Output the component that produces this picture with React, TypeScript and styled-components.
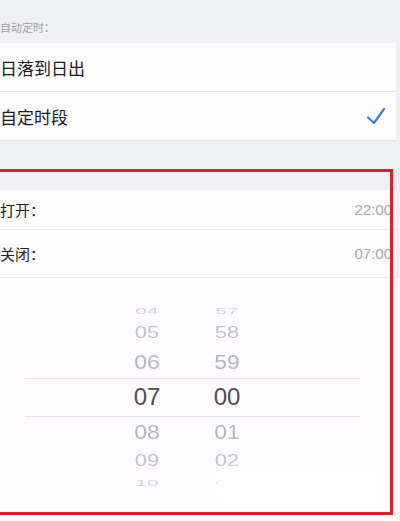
import * as React from "react";
import styled, { createGlobalStyle } from "styled-components";

const GlobalStyle = createGlobalStyle`
  html, body {
    margin: 0;
    padding: 0;
    background: #eef0f5;
  }
  body {
    font-family: "Noto Sans CJK SC", "Liberation Sans", sans-serif;
  }
`;

const Screen = styled.div`
  width: 400px;
  height: 521px;
  overflow: hidden;
  background: #eef0f5;
`;

const SectionLabel = styled.div`
  height: 43px;
  box-sizing: border-box;
  padding: 19px 0 0 0;
  font-size: 11px;
  line-height: 16px;
  color: #a2a2a8;
`;

const Group = styled.div`
  margin-right: 4px;
  background: #fdfdfe;
`;

const OptionRow = styled.div`
  height: 48px;
  display: flex;
  align-items: center;
  justify-content: space-between;
  padding-right: 10px;
  font-size: 17px;
  color: #1a1a1e;
  border-bottom: 1px solid #e3e3e8;
`;

const Schedule = styled.div`
  position: relative;
  height: 381px;
`;

const Gap = styled.div`
  height: 49px;
`;

const TimeRow = styled.div<{ $h: number }>`
  height: ${(p) => p.$h}px;
  display: flex;
  align-items: center;
  justify-content: space-between;
  padding-right: 4px;
  border-bottom: 1px solid #ececf0;
  background: #fdfdfe;
`;

const TimeLabel = styled.span`
  font-size: 15px;
  color: #222226;
`;

const TimeValue = styled.span`
  font-family: "Liberation Sans", sans-serif;
  font-size: 15px;
  color: #a8a8ae;
`;

const Picker = styled.div`
  position: relative;
  height: 250px;
  box-sizing: border-box;
  padding: 24px 0 0 122px;
  background: #fefcfe;
  display: flex;
  gap: 30px;
`;

const Band = styled.div`
  position: absolute;
  left: 25px;
  width: 335px;
  top: 100px;
  height: 37px;
  border-top: 1px solid #e4e4e8;
  border-bottom: 1px solid #e4e4e8;
`;

const Wheel = styled.div`
  width: 50px;
  display: flex;
  flex-direction: column;
`;

const looks = [
  { h: 38, size: 24, color: "#4d4d52", scale: 1 },
  { h: 32, size: 23, color: "#b6b6bb", scale: 0.88 },
  { h: 26, size: 22, color: "#c4c4c9", scale: 0.74 },
  { h: 18, size: 21, color: "#d4d4d8", scale: 0.42 },
];

const Item = styled.div<{ $d: number }>`
  height: ${(p) => looks[p.$d].h}px;
  display: flex;
  align-items: center;
  justify-content: center;
  font-family: "Liberation Sans", sans-serif;
  font-size: ${(p) => looks[p.$d].size}px;
  color: ${(p) => looks[p.$d].color};
  transform: scaleY(${(p) => looks[p.$d].scale});
`;

const Smudge = styled.div`
  position: absolute;
  left: 215px;
  top: 328px;
  width: 165px;
  height: 36px;
  border-radius: 10px;
  background: rgba(255, 255, 255, 0.95);
  filter: blur(4px);
`;

const Frame = styled.div`
  position: absolute;
  left: -10px;
  top: 28px;
  width: 403px;
  height: 346px;
  box-sizing: border-box;
  border: 3px solid #d8222b;
  pointer-events: none;
`;

const Check = () => (
  <svg width="20" height="18" viewBox="0 0 20 18">
    <path d="M2 10.5 L8 16 L18 2" fill="none" stroke="#3b80d6" strokeWidth="2.2" strokeLinecap="round" strokeLinejoin="round" />
  </svg>
);

const hours = ["04", "05", "06", "07", "08", "09", "10"];
const minutes = ["57", "58", "59", "00", "01", "02", "03"];
const dist = [3, 2, 1, 0, 1, 2, 3];

export default function App() {
  return (
    <Screen>
      <GlobalStyle />
      <SectionLabel>自动定时：</SectionLabel>
      <Group>
        <OptionRow>日落到日出</OptionRow>
        <OptionRow>
          自定时段
          <Check />
        </OptionRow>
      </Group>
      <Schedule>
        <Gap />
        <Group>
          <TimeRow $h={39}>
            <TimeLabel>打开：</TimeLabel>
            <TimeValue>22:00</TimeValue>
          </TimeRow>
          <TimeRow $h={47}>
            <TimeLabel>关闭：</TimeLabel>
            <TimeValue>07:00</TimeValue>
          </TimeRow>
        </Group>
        <Picker>
          <Band />
          <Wheel>
            {hours.map((v, i) => (
              <Item key={v} $d={dist[i]}>{v}</Item>
            ))}
          </Wheel>
          <Wheel>
            {minutes.map((v, i) => (
              <Item key={v} $d={dist[i]}>{v}</Item>
            ))}
          </Wheel>
        </Picker>
        <Smudge />
        <Frame />
      </Schedule>
    </Screen>
  );
}
